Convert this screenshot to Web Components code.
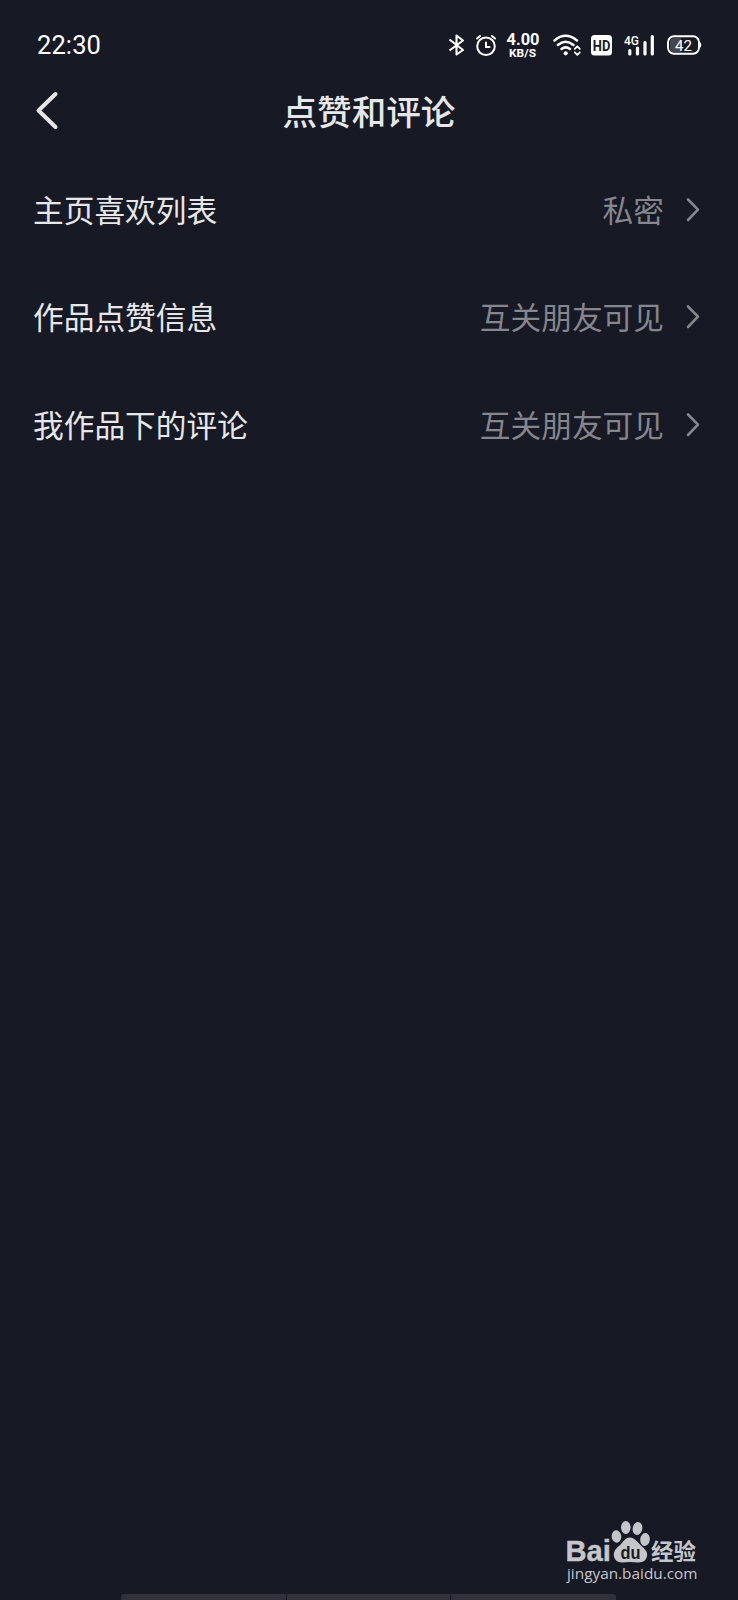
<!DOCTYPE html>
<html lang="zh-CN">
<head>
<meta charset="utf-8">
<title>点赞和评论</title>
<style>
html,body{margin:0;background:#171924}
body{width:738px;height:1600px;overflow:hidden;font-family:Roboto,"Noto Sans CJK SC",sans-serif;color:#e7e7ea}
</style>
</head>
<body>
<privacy-screen>
  <status-bar slot="status" time="22:30"></status-bar>
  <nav-bar slot="nav">点赞和评论</nav-bar>
  <setting-row value="私密">主页喜欢列表</setting-row>
  <setting-row value="互关朋友可见">作品点赞信息</setting-row>
  <setting-row value="互关朋友可见">我作品下的评论</setting-row>
  <site-mark slot="footer"></site-mark>
  <gesture-bar slot="footer"></gesture-bar>
</privacy-screen>
<script>
function define(name, html, setup) {
  const t = document.createElement('template');
  t.innerHTML = html;
  customElements.define(name, class extends HTMLElement {
    constructor() {
      super();
      this.attachShadow({mode: 'open'}).append(t.content.cloneNode(true));
    }
    connectedCallback() { if (setup) setup(this, this.shadowRoot); }
  });
}

define('privacy-screen', `
<style>
:host{display:flex;flex-direction:column;height:1600px;background:#171924}
main{flex:1}
</style>
<slot name="status"></slot><slot name="nav"></slot><main><slot></slot></main><slot name="footer"></slot>`);

define('status-bar', `
<style>
:host{display:flex;align-items:center;height:40px;padding:25px 36px 0 37px;color:#fff}
time{font:400 25.5px/40px Roboto,sans-serif;flex:1;letter-spacing:.1px}
svg{display:block;flex:none;height:40px}
.icons{display:flex;gap:8px}
text{font-family:Roboto,sans-serif;fill:#fff}
</style>
<time></time>
<div class="icons">
<svg width="20" viewBox="446 25 20 40" fill="none" stroke="#fff" stroke-width="2.100" stroke-linejoin="round"><path d="M449.500 39.500L463 50L456.500 54.500V35.500L463 40.500L449.500 50.500"/></svg>
<svg width="24" viewBox="474 25 24 40" fill="none" stroke="#fff" stroke-width="2" stroke-linecap="round"><circle cx="486" cy="46.300" r="8.800"/><path d="M486 42.500V47H489.500M477 38.500L480 36M492 36L495 38.500"/></svg>
<svg width="36" viewBox="506 25 36 40"><text x="506.500" y="45.300" font-size="16.500" font-weight="700" textLength="33" lengthAdjust="spacingAndGlyphs">4.00</text><text x="509" y="57" font-size="11.500" font-weight="700" textLength="27" lengthAdjust="spacingAndGlyphs">KB/S</text></svg>
<svg width="32" viewBox="550 25 32 40" fill="none" stroke="#fff" stroke-width="2.500" stroke-linecap="round"><path d="M554.500 40.500Q565.500 31 577 40.500M557.800 45Q565.500 38.500 573.500 45M561.500 49Q565.500 45.800 570 49"/><circle cx="565.700" cy="53.300" r="2.100" fill="#fff" stroke="none"/><path stroke-width="1.800" stroke-linejoin="round" d="M574.800 48.800L577.300 46.300L579.800 48.800M574.800 52.300L577.300 54.800L579.800 52.300"/></svg>
<svg width="24" viewBox="590 25 24 40"><rect x="591" y="35" width="21" height="20.500" rx="3.500" fill="#fff"/><text x="592.800" y="50.800" font-size="15" font-weight="700" textLength="17.500" lengthAdjust="spacingAndGlyphs" style="fill:#171924">HD</text></svg>
<svg width="34" viewBox="622 25 34 40"><text x="624" y="45" font-size="13.500" font-weight="500" textLength="15" lengthAdjust="spacingAndGlyphs">4G</text><path d="M629.800 50.500V54M637.500 48V54M645 42.500V54M652.300 36.500V54" fill="none" stroke="#fff" stroke-width="3.200" stroke-linecap="round"/></svg>
<svg width="38" viewBox="664 25 38 40"><rect x="668" y="36.200" width="31" height="17.600" rx="6" fill="#171924" stroke="#fff" stroke-width="1.900"/><path d="M673 38H681V52H673Q670 52 670 48V42Q670 38 673 38" fill="#444651"/><path d="M699.500 42Q701.300 42.500 701.300 45T699.500 48Z" fill="#fff"/><text x="675" y="50.500" font-size="15" textLength="17" lengthAdjust="spacingAndGlyphs">42</text></svg>
</div>`, (h, r) => { r.querySelector('time').textContent = h.getAttribute('time'); });

define('nav-bar', `
<style>
:host{display:grid;grid-template-columns:80px 1fr 80px;align-items:center;height:92px}
h1{margin:0 0 2px;font:500 34.600px/50px "Noto Sans CJK SC",sans-serif;text-align:center;white-space:nowrap}
svg{display:block}
</style>
<svg width="80" height="92" viewBox="0 65 80 92" fill="none" stroke="#e7e7ea" stroke-width="4" stroke-linecap="round" stroke-linejoin="round"><path d="M55.500 94L38.500 110.500L55.500 127"/></svg>
<h1><slot></slot></h1>`);

define('setting-row', `
<style>
:host{display:flex;align-items:center;height:107.500px;padding:0 36px 0 33px;box-sizing:border-box;font:400 30.700px/44px "Noto Sans CJK SC",sans-serif}
span{padding-bottom:4px}
.label{flex:1}
.value{color:#85868e}
svg{margin-left:20px;display:block}
</style>
<span class="label"><slot></slot></span><span class="value"></span>
<svg width="18" height="28" viewBox="0 0 18 28" fill="none" stroke="#85868e" stroke-width="2.600" stroke-linecap="round" stroke-linejoin="round"><path d="M4 2.500L14 12.700L4 23"/></svg>`,
(h, r) => { r.querySelector('.value').textContent = h.getAttribute('value'); });

define('site-mark', `
<style>
:host{display:flex;justify-content:flex-end;padding-right:33px;height:75px}
svg{display:block}
</style>
<svg width="145" height="75" viewBox="560 1515 145 75" fill="#c5c6cb">
<g font-family="Liberation Sans,sans-serif" font-weight="700">
<text x="565.500" y="1561.300" font-size="30" textLength="45.500" lengthAdjust="spacingAndGlyphs" stroke="#c5c6cb" stroke-width=".4">Bai</text>
<ellipse cx="616.500" cy="1536.500" rx="4.800" ry="6.200" transform="rotate(-8 616.500 1536.500)"/>
<ellipse cx="625.800" cy="1527.500" rx="4.800" ry="6.500"/>
<ellipse cx="637.500" cy="1528.500" rx="4.800" ry="6.500" transform="rotate(12 637.500 1528.500)"/>
<ellipse cx="645" cy="1539.500" rx="4.800" ry="6.500" transform="rotate(8 645 1539.500)"/>
<path d="M630 1537.500C635 1537.500 638 1543 642 1546.500C647 1551 648.500 1554 646 1559C643 1564 636 1562 630 1562C624 1562 618 1564 615 1559C612.500 1554 614 1550 619 1546C623 1542.500 625 1537.500 630 1537.500Z"/>
<text x="620.500" y="1558.500" font-size="18" textLength="20" lengthAdjust="spacingAndGlyphs" fill="#171924">du</text>
</g>
<text x="651" y="1559.500" font-family="Noto Sans CJK SC,sans-serif" font-size="22.500" font-weight="700" textLength="45" lengthAdjust="spacingAndGlyphs">经验</text>
<text x="567" y="1579" font-family="Open Sans,sans-serif" font-size="15" font-weight="500" textLength="130.500" lengthAdjust="spacingAndGlyphs">jingyan.baidu.com</text>
</svg>`);

define('gesture-bar', `
<style>
:host{display:grid;grid-template-columns:165px 163px 1fr;gap:1px;height:6px;margin:4px 122px 0 121px;border-radius:3px 3px 0 0;overflow:hidden}
i{background:#30313b}
</style>
<i></i><i></i><i></i>`);
</script>
</body>
</html>
